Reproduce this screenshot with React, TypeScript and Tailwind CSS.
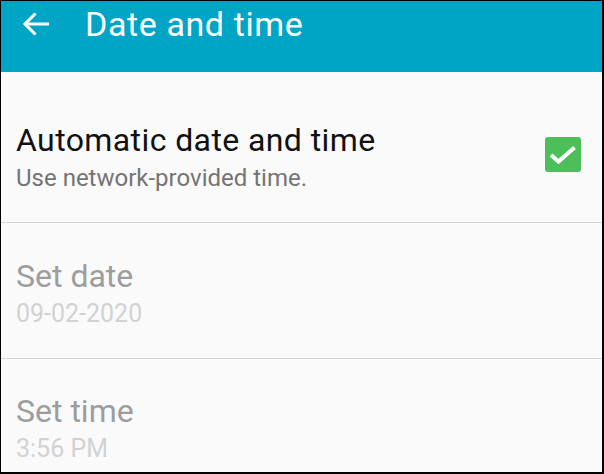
export default function App() {
  return (
    <div className="w-[604px] h-[474px] overflow-hidden border-t border-l border-r-2 border-b-2 border-black bg-[#fafafa] font-['Roboto',sans-serif]">
      <div className="h-[71px] bg-[#00a5c6] flex items-start pt-[4px]">
        <svg width="28" height="24" viewBox="0 0 28 24" className="ml-[21px] mt-[7px]" fill="none" stroke="white" strokeWidth="3">
          <path d="M3 12 H27" />
          <path d="M13.5 1.5 L3 12 L13.5 22.5" />
        </svg>
        <div className="ml-[35px] text-white text-[34px] leading-[39px] tracking-[0.6px]">Date and time</div>
      </div>

      <div className="h-[151px] border-b border-[#d6d6d6] flex items-start justify-between pl-[15px] pr-[21px] pt-[49px]">
        <div>
          <div className="text-[32px] leading-[38px] text-[#111111] tracking-[0.4px]">Automatic date and time</div>
          <div className="text-[24px] leading-[28px] text-[#747474] mt-[5px]">Use network-provided time.</div>
        </div>
        <div className="w-[36px] h-[35px] mt-[16px] rounded-[3px] bg-[#4cbf5a]">
          <svg width="36" height="35" viewBox="0 0 36 35" fill="none" stroke="white" strokeWidth="4">
            <path d="M6 18 L13.5 24.5 L29.5 10.5" />
          </svg>
        </div>
      </div>

      <div className="h-[136px] border-b border-[#d6d6d6] pl-[15px] pt-[34px]">
        <div className="text-[32px] leading-[38px] text-[#9d9d9d]">Set date</div>
        <div className="text-[25px] leading-[30px] text-[#d2d2d2] mt-[4px]">09-02-2020</div>
      </div>

      <div className="pl-[15px] pt-[33px]">
        <div className="text-[32px] leading-[38px] text-[#9d9d9d]">Set time</div>
        <div className="text-[25px] leading-[30px] text-[#d2d2d2] mt-[4px]">3:56 PM</div>
      </div>
    </div>
  );
}
